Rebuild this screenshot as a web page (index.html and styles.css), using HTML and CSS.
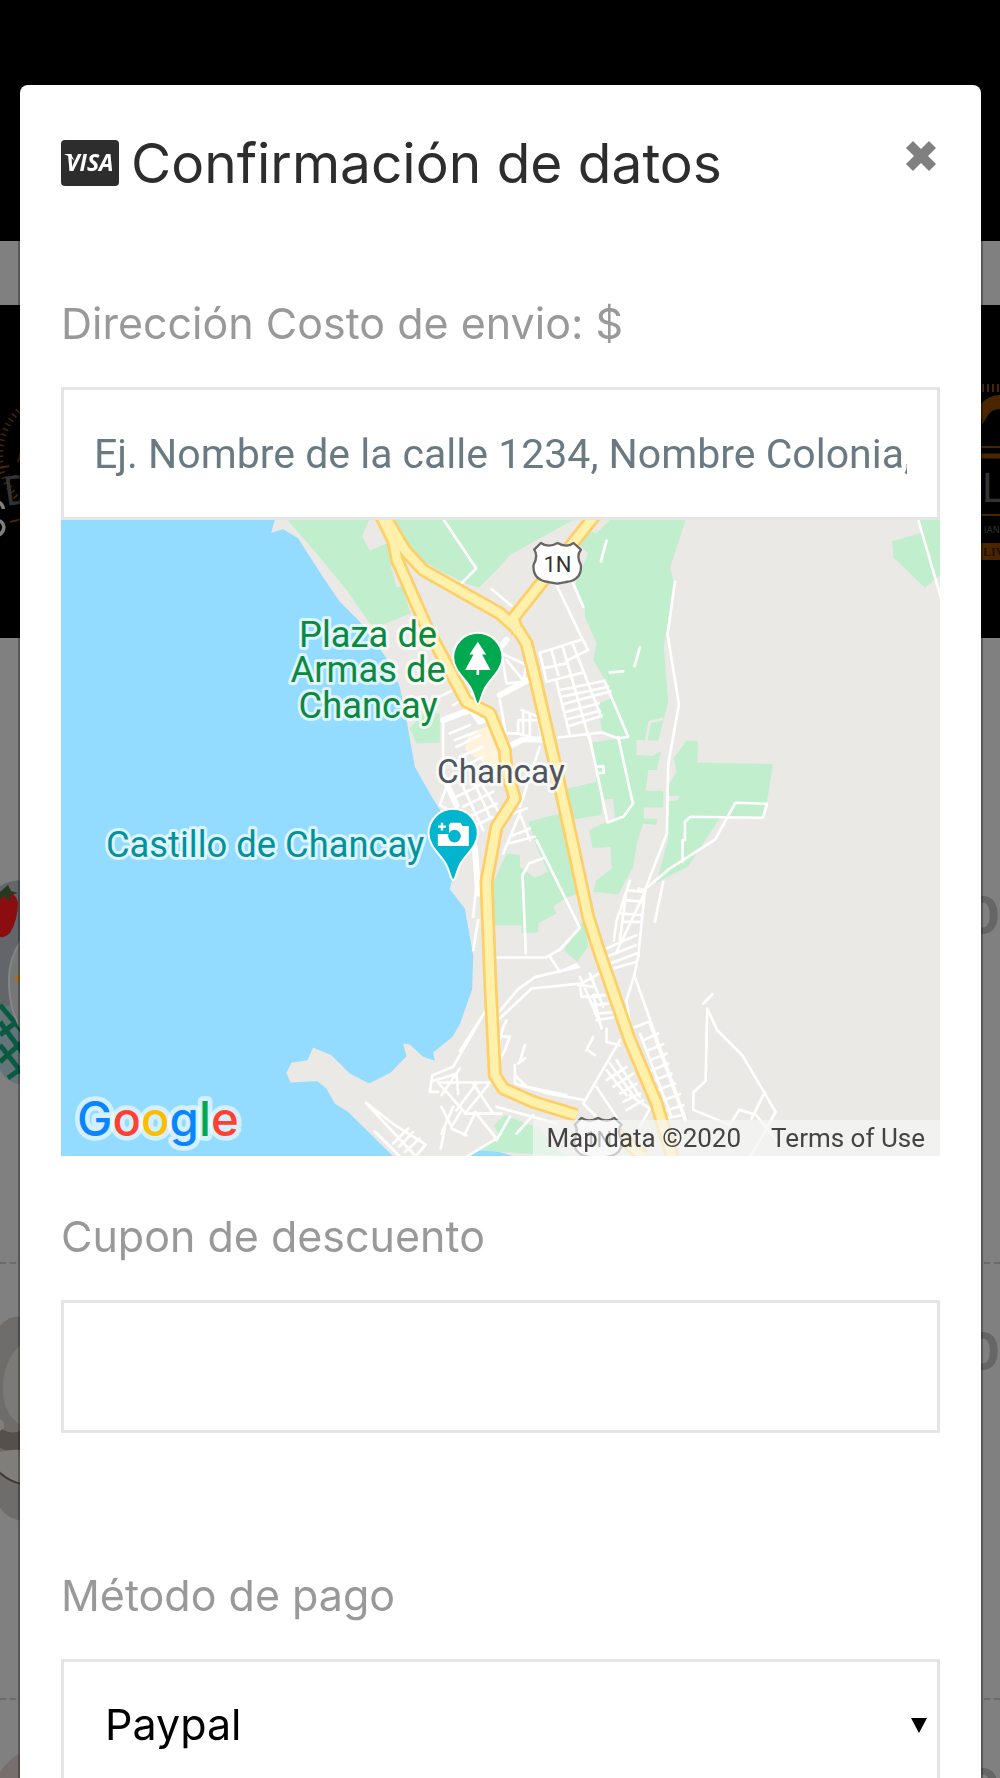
FILE: index.html
```
<!DOCTYPE html>
<html lang="es">
<head>
<meta charset="utf-8">
<meta name="viewport" content="width=device-width, initial-scale=1">
<title>Confirmación de datos</title>
<link rel="stylesheet" href="styles.css">
</head>
<body>
<div class="shop" aria-hidden="true">
  <div class="shop-top"></div>
  <div class="shop-strip"></div>
  <div class="hero">
    <svg class="hero-art" viewBox="0 0 60 333">
      <g fill="none" stroke="#4a2500">
        <circle cx="62" cy="150" r="62" stroke-width="6" stroke-dasharray="1.5 4"/>
        <path d="M0 163l9-2M10 217l12-3M18 157l6-20" stroke-width="2"/>
      </g>
      <text x="6" y="201" class="hero-mark" transform="rotate(-8 6 201)">D</text>
      <text x="-24" y="232" class="hero-word">S</text>
    </svg>
    <svg class="hero-art" viewBox="0 0 60 333">
      <path d="M40 100q8-10 20-10v14q-8 0-12 6l-6 10z" fill="#4a2500"/>
      <path d="M43 79v8M48 79v8M53 79v8M58 79v8M40 142h20M40 210h20" stroke="#4a2500" stroke-width="2"/>
      <path d="M40 151h20" stroke="#4a2500" stroke-width="5"/>
      <path d="M41 238h19v17H41z" fill="#4a2500"/>
      <text x="42" y="197" class="hero-mark">L</text>
      <text x="44" y="228" class="hero-sub">IAN</text>
      <text x="43" y="251" class="hero-tag">LIV</text>
    </svg>
  </div>
  <div class="products">
    <div class="product">
      <svg class="product-photo" viewBox="0 0 170 205">
        <path d="M0 6Q10 0 22 0h60v205H22Q8 203 0 190z" fill="#62666b"/>
        <path d="M0 130l22-12v87Q8 203 0 190z" fill="#63757a"/>
        <path d="M0 142l22 30M0 165l22 28M0 125l22 26M0 155l22-18M0 182l22-20M8 198l14-10" stroke="#0a5a41" stroke-width="5"/>
        <path d="M22 60Q8 78 9 105t13 45z" fill="#777" stroke="#858585" stroke-width="2"/>
        <path d="M14 98l8-5v12z" fill="#a86d20"/>
        <path d="M0 14q14-6 18 8 0 18-8 31-5 5-10 4z" fill="#8c0d10"/>
        <path d="M0 12l8-7 3 6 7 2-8 2 1 7-7-6-4 4z" fill="#26391f"/>
      </svg>
      <span class="price">0</span>
    </div>
    <div class="product">
      <svg class="product-photo" viewBox="0 0 170 205">
        <path d="M0 10Q8 0 22 0h60v205H22Q8 203 0 192z" fill="#6e6d6b"/>
        <path d="M22 28Q4 42 3 70t19 40z" fill="#7b7a76"/>
        <path d="M0 112q12 8 22 2v28L0 132z" fill="#55504b"/>
        <path d="M0 103q5 2 4 9l-4 3zM0 136q10-3 22-2v34Q8 164 0 155z" fill="#807e7a"/>
        <path d="M0 157q10 9 22 11" fill="none" stroke="#3f3833" stroke-width="2"/>
      </svg>
      <span class="price">0</span>
    </div>
    <div class="product">
      <svg class="product-photo" viewBox="0 0 170 205">
        <path d="M0 20Q10 6 22 0h60v205H0z" fill="#776e6e"/>
      </svg>
      <span class="price">0</span>
    </div>
  </div>
</div>

<div class="overlay">
  <section class="modal" role="dialog" aria-modal="true" aria-labelledby="modal-title">
    <header class="modal-head">
      <svg class="visa" viewBox="0 0 58 46" role="img" aria-label="Visa">
        <rect width="58" height="46" rx="4" fill="#2d2d2d"/>
        <text x="5" y="31" class="visa-word">VISA</text>
        <path d="M3 14h7l4 8q-3-5-11-8z" fill="#fff"/>
      </svg>
      <h1 id="modal-title">Confirmación de datos</h1>
      <button class="close" type="button" aria-label="Cerrar">
        <svg viewBox="0 0 30 30"><path d="M7 0l8 8 8-8 7 7-8 8 8 8-7 7-8-8-8 8-7-7 8-8-8-8z" fill="#808080"/></svg>
      </button>
    </header>
    <form class="fields">
      <div class="field">
        <label for="address">Dirección Costo de envio: $</label>
        <input id="address" class="control" type="text" placeholder="Ej. Nombre de la calle 1234, Nombre Colonia, Ciudad">
        <div class="map">
          <svg class="map-art" viewBox="4 0 2636 1908">
            <rect width="2640" height="1908" fill="#ebe9e6"/>
            <g fill="#93dbff">
              <path d="M0 0H645L634 38 670 28 715 55 790 172 840 245 900 305 950 370 990 430 1020 500 1042 610 1065 740 1110 820 1140 868 1165 960 1178 1075 1170 1107 1215 1165 1240 1305 1237 1407 1200 1512 1178 1550 1120 1597 1125 1622 1090 1610 1050 1573 1030 1570 1040 1608 992 1658 928 1690 870 1660 815 1605 760 1582 743 1620 695 1628 680 1658 692 1687 773 1683 800 1705 825 1750 865 1775 1000 1908H0z"/>
              <path d="M1215 1908l55-22 60 12 30 10z"/>
            </g>
            <g fill="#c1eecd">
              <path d="M683 0H928L907 48 930 92 985 68 1005 125 993 140 1010 200 1030 200 1040 240 1052 280 960 318 930 310 860 210 770 100z"/>
              <path d="M1000 0H1540L1350 105 1320 140 1258 203 1215 190 1080 120 1030 50z"/>
              <path d="M1650 0H1877L1830 145 1843 185 1812 380 1825 545 1795 662 1730 660 1730 705 1780 708 1805 692 1790 750 1765 750 1758 812H1810V862H1752V895L1792 897 1790 915 1750 910 1733 960 1720 1040 1675 1123 1600 1115 1610 1080 1655 1045 1652 980 1598 984 1588 930 1640 905 1665 895 1660 835 1625 840V885L1530 900 1540 960 1560 1050 1575 1190 1585 1280 1552 1325 1513 1290 1570 1200 1555 1120 1515 1135 1480 1160 1490 1180 1435 1210V1237L1385 1240V1215H1300L1290 1110 1320 1045 1340 1000 1380 1005 1380 1040 1425 1073 1465 1055 1430 980 1405 905 1500 880 1525 805 1610 785 1595 668 1678 655 1627 635 1615 550 1655 535 1635 480 1600 420 1610 370 1575 290 1575 260 1545 195 1585 100 1560 75 1575 30 1610 40z"/>
              <path d="M1880 662h35l-3 65 227 5-25 160-135 3-95 145-95 48 35-125V845l30-5 5-12h-35v-30l25-40-7-45z"/>
              <path d="M2496 64L2585 38 2572 0H2640V165L2595 203 2500 112z"/>
              <path d="M1050 625l20 45 70-3V580l-45-5zM1248 1890q45-15 70-45l-15-30 30-30 110 40 30 50 50 33z"/>
            </g>
            <path d="M1225 640l80-30 35 70-20 80-60-40-45-30z" fill="#fff3dc"/>
            <path d="M1770 605l40-8M1770 605l-12 60" stroke="#ebe9e6" stroke-width="8" fill="none"/>

            <g class="street">
              <path d="M1152 0l97 145-47 48M1295 207l60 50M1490 195l75 157 20 38-60 30M1540 190l30 70M1640 62l-17 62M1740 382l-16 56M1650 457l40-3M1845 185l-22 158 34 210-32 180-4 207-66 170"/>
              <path d="M1440 398l128-40M1450 445l70-15M1460 485l110-28M1440 398l20 87M1475 390l20 75M1510 385l82 285M1540 375l84 215M1490 485l40 160M1635 485l70 165-30 5-48-18-130 15M1500 510l135-28M1505 530l140-30M1512 552l140-38M1520 575l96-25M1525 597l96-25M1530 617l96-30"/>
              <path d="M1588 645l55 262 48-18 28-38-44-200M1610 740l20-2 2 20-22 2M2575 0l70 240"/>
              <path d="M1875 960V905l17-15 217 3 12-42-95-3-60 110-140 90-65 55M1868 960v65M1810 1085l-25 120"/>
              <path d="M1430 960l130 263-60 65-42 24H1300M1398 1300l-10-235 20-35 40-15M1320 1472l55-65 52-37 130-30M1320 1495l95-90 150-15 70-40M1470 1310l30 45 50-22"/>
              <path d="M1410 960l-30-80-50 120M1440 680l-60 180M1360 880l40-15M1350 950l60-25M1345 970l80-20"/>
              <path d="M1340 1500q-30 60-20 120l15-30 15-40-30-2M1200 1593l77-120M1275 1475l-95 165-62 25-8 50 25 0M1115 1683l75-22 5 60M1135 1687h155M1145 1725l55-80M1135 1687l85 95M1250 1690l-60 80M1240 1690l60 90M1285 1695l-70 85M1180 1760l-35 80M1145 1760l30 60 30-50M1215 1780h110M1248 1775l-35 70M1245 1775l65 80-100 60M1175 1825l45 20M1155 1825l-12 60"/>
              <path d="M918 1748l150 160M918 1748l85 65 95 60-35 40M1045 1825l-45 45M1060 1835l-42 45M1080 1855l-45 40M945 1834l75 74"/>
              <path d="M1710 1082l-40 120-8 60M1758 1110l-90 190M1735 1105l20 5-20 200-12 55M1700 1110l-20 150M1700 1110l55 5M1695 1140l55 5M1685 1180l62 5M1690 1205h55M1640 1285l90-40M1640 1310l88-35M1650 1330l80-30M1660 1345l70-20"/>
              <path d="M1723 1365l-23 75 8 60M1723 1365l155 435M1560 1370l65 150M1590 1360l40 100M1555 1395l50 5M1600 1425l25 100M1600 1425l35 0M1600 1455l45-5M1605 1480l50-3M1610 1500l50-8M1640 1525v40l40 10M1560 1395l5 35 45 0"/>
              <path d="M1715 1525l52-20M1740 1540l95 250M1770 1510l105 290M1750 1560l45-20M1765 1590l45-18M1770 1620l50-20M1775 1650l50-20M1785 1680l50-20M1790 1710l55-20M1810 1740l50-18M1820 1770l50-15M1815 1795l50-10"/>
              <path d="M1680 1560l-110 190 50 50M1640 1650l60 75M1650 1630l80 110M1670 1620l70 110M1640 1680l60-40M1660 1700l60-40M1680 1720l50-30M1690 1745l50-25M1700 1770l50-30M1610 1700l60 90"/>
              <path d="M1930 1450l28-28M1942 1465l-5 217-37 35v52l110 45 28-45 50 15 65 80M1942 1465l30 65 75 75 100 170-55 100-20 33M2115 1715l-40 80"/>
              <path d="M1365 1635v55l100 30 110 20M1365 1665l35 35 120 25M1380 1625l15-50M1375 1630l20-15M1580 1590l20-40M1585 1590l20 15"/>
              <path d="M1310 1760l180 50M1420 1785l-50 55M1350 1790l-40 70M1710 1725l60 40-30 55"/>
              <path d="M1150 600l100-45M1150 600v160l40 90M1130 535l60-30M1180 555l60-35M1170 640l60-25M1185 660l65-25M1190 680l70-35M1200 710l70-30M1210 740l60-30M1210 800l60 130M1240 780l50 110M1270 800l50 80M1190 830l90-45M1210 860l90-45M1230 890l80-40M1240 920l60-30M1160 800l-20 55 30 15M1250 1090l-10 100M1255 1200l-15 90"/>
              <path d="M1325 400l75 35-10 50-50 5zM1340 420l50 60M1385 570l50 20 10 70-70-20 0-40 60 0M1390 570v70M1410 580v65M1340 640h35M1320 540l18 100"/>
            </g>
            <g class="street wide">
              <path d="M1340 360l-25 30M1320 525l90-48M1345 680l45-22h75M1150 600l80-30M1160 790l30 65M1245 980l10 140M1235 570l25 35 40-15"/>
            </g>
            <g class="road-edge">
              <path d="M960-20L1000 60 1012 120 1100 320 1220 545 1290 580 1335 690 1340 750 1365 835 1310 920 1280 1085 1292 1400 1305 1665 1330 1705 1420 1745 1550 1785M1660 1830L1750 1908"/>
              <path d="M970-20L1035 90 1090 150 1320 280 1375 330 1400 370 1420 450 1485 730 1540 980 1585 1190 1620 1300 1710 1560 1790 1750 1840 1920M1610-20L1360 295 1375 340"/>
            </g>
            <g class="road-fill">
              <path d="M960-20L1000 60 1012 120 1100 320 1220 545 1290 580 1335 690 1340 750 1365 835 1310 920 1280 1085 1292 1400 1305 1665 1330 1705 1420 1745 1550 1785M1660 1830L1750 1908"/>
              <path d="M970-20L1035 90 1090 150 1320 280 1375 330 1400 370 1420 450 1485 730 1540 980 1585 1190 1620 1300 1710 1560 1790 1750 1840 1920M1610-20L1360 295 1375 340"/>
            </g>

            <g fill="#fff" stroke="#666" stroke-width="7" stroke-linejoin="round">
              <path d="M1443 69q22 16 50 0 27 16 48 0l22 20q-15 18 0 46 4 45-45 51l-26 5-26-5q-48-6-45-51 15-28 2-46z"/>
              <path d="M1565 1793q22 16 50 0 27 16 48 0l22 20q-15 18 0 46 4 45-45 51l-26 5-26-5q-48-6-45-51 15-28 2-46z"/>
            </g>
            <text x="1493" y="157" class="route">1N</text>
            <text x="1615" y="1881" class="route">1N</text>

            <g stroke="#fff" stroke-width="6">
              <path d="M1254 552c-8 0-10-30-24-52-16-26-50-52-50-88a74 74 0 0 1 148 0c0 36-34 62-50 88-14 22-16 52-24 52z" fill="#00a94f"/>
              <path d="M1180 1080c-8 0-10-30-24-52-16-26-50-52-50-88a74 74 0 0 1 148 0c0 36-34 62-50 88-14 22-16 52-24 52z" fill="#00b5cd"/>
            </g>
            <path d="M1254 365l25 38h-12l25 47h-34v15h-8v-15h-34l25-47h-12z" fill="#fff"/>
            <path d="M1134 942h34v-24h-2l6-10h30l6 10h19v60h-93zM1143 908h7v8h8v7h-8v8h-7v-8h-8v-7h8z" fill="#fff"/>
            <circle cx="1184" cy="948" r="19" fill="#00b5cd"/>

            <g class="place park">
              <text x="925" y="380">Plaza de</text>
              <text x="925" y="487">Armas de</text>
              <text x="925" y="594">Chancay</text>
            </g>
            <text x="1323" y="788" class="place town">Chancay</text>
            <text x="616" y="1012" class="place sight">Castillo de Chancay</text>
            <text x="52" y="1847" class="google"><tspan fill="#0a84ff">G</tspan><tspan fill="#ff4131">o</tspan><tspan fill="#fdbd00">o</tspan><tspan fill="#0a84ff">g</tspan><tspan fill="#00a94f">l</tspan><tspan fill="#ff4131">e</tspan></text>
          </svg>
          <div class="map-credit">
            <span>Map data ©2020</span>
            <a href="#terms">Terms of Use</a>
          </div>
        </div>
      </div>
      <div class="field coupon">
        <label for="coupon">Cupon de descuento</label>
        <input id="coupon" class="control" type="text">
      </div>
      <div class="field payment">
        <label for="payment">Método de pago</label>
        <div class="select">
          <select id="payment" class="control">
            <option>Paypal</option>
          </select>
          <svg class="caret" viewBox="0 0 16 16"><path d="M0 1h16L8 16z"/></svg>
        </div>
      </div>
    </form>
  </section>
</div>
</body>
</html>
```
FILE: styles.css
```
* { box-sizing: border-box; }

body {
  margin: 0;
  overflow: hidden;
  background: #808080;
  font-family: Inter, "Liberation Sans", sans-serif;
}

/* dimmed shop page behind the dialog */
.shop {
  height: 100vh;
  overflow: hidden;
}
.shop-top { height: 241px; background: #000; }
.shop-strip { height: 64px; background: #808080; }
.hero {
  display: flex;
  justify-content: space-between;
  height: 333px;
  background: #000;
}
.hero-art { width: 60px; height: 333px; }
.hero-mark { font-size: 40px; fill: #333; }
.hero-word { font-size: 52px; font-weight: 300; fill: #808080; }
.hero-sub { font-size: 9px; fill: #333; }
.hero-tag { font: bold 12px "Liberation Serif", serif; fill: #1c0f00; }

.products { padding-top: 190px; }
.product {
  display: flex;
  justify-content: space-between;
  height: 436px;
  padding-top: 52px;
  border-bottom: 2px dashed #6c6c6c;
}
.product-photo { width: 170px; height: 205px; }
.price {
  font-size: 52px;
  font-weight: 700;
  line-height: 72px;
  color: #666;
}

/* dialog */
.overlay {
  position: fixed;
  inset: 0;
  overflow-y: auto;
  scrollbar-width: none;
  padding: 85px 19px 0 20px;
}
.modal {
  padding: 48px 41px;
  border-radius: 8px;
  background: #fff;
  box-shadow: 0 0 0 2px rgba(0, 0, 0, .3);
}
.modal-head {
  display: flex;
  align-items: center;
}
.visa { width: 58px; height: 46px; }
.visa-word { font: italic bold 23px "Open Sans", sans-serif; fill: #fff; }
h1 {
  flex: 1;
  margin: 0 0 0 12px;
  font-size: 55px;
  font-weight: 400;
  line-height: 60px;
  color: #2d2d2d;
}
.close {
  display: flex;
  align-self: flex-start;
  padding: 8px 4px;
  border: 0;
  background: none;
}
.close svg { width: 30px; height: 30px; }

.fields { padding-top: 100px; }
.field label {
  display: block;
  margin-bottom: 34px;
  font-size: 43px;
  line-height: 60px;
  color: #999;
}
.control {
  display: block;
  width: 100%;
  height: 133px;
  padding: 0 30px;
  border: 3px solid #e5e5e5;
  border-radius: 0;
  background: #fff;
  font: 41px Roboto, sans-serif;
  color: #000;
}
.control::placeholder { color: #6a7a83; opacity: 1; }
.coupon { padding-top: 50px; }
.payment { padding-top: 132px; }
.select { position: relative; }
.select .control {
  appearance: none;
  padding: 0 41px 4px;
  font: 43px Inter, sans-serif;
}
.caret {
  position: absolute;
  top: 58px;
  right: 13px;
  width: 16px;
  height: 16px;
  pointer-events: none;
}

/* map */
.map { position: relative; }
.map-art { display: block; width: 100%; }
.map-credit {
  position: absolute;
  right: 0;
  bottom: 0;
  display: flex;
  gap: 30px;
  padding: 0 15px 0 13px;
  background: rgba(245, 245, 245, .7);
  font: 26px/36px Roboto, sans-serif;
  color: #444;
}
.map-credit a { color: inherit; text-decoration: none; }
.street { fill: none; stroke: #fff; stroke-width: 8; stroke-linejoin: round; stroke-linecap: round; }
.street.wide { stroke-width: 18; }
.road-edge, .road-fill { fill: none; stroke-linejoin: round; }
.road-edge { stroke: #fdcf66; stroke-width: 42; }
.road-fill { stroke: #fff0ab; stroke-width: 26; }
.route { font: 400 66px Roboto, sans-serif; fill: #333; text-anchor: middle; }
.place {
  font: 400 109px Roboto, sans-serif;
  text-anchor: middle;
  paint-order: stroke;
  stroke: #fff;
  stroke-opacity: .7;
  stroke-width: 18;
  stroke-linejoin: round;
}
.park { fill: #0b8a3e; }
.sight { fill: #00939c; }
.town { font-size: 100px; fill: #4d5560; }
.google {
  font: 500 142px Inter, sans-serif;
  paint-order: stroke;
  stroke: #fff;
  stroke-opacity: .6;
  stroke-width: 28;
  stroke-linejoin: round;
}
```
